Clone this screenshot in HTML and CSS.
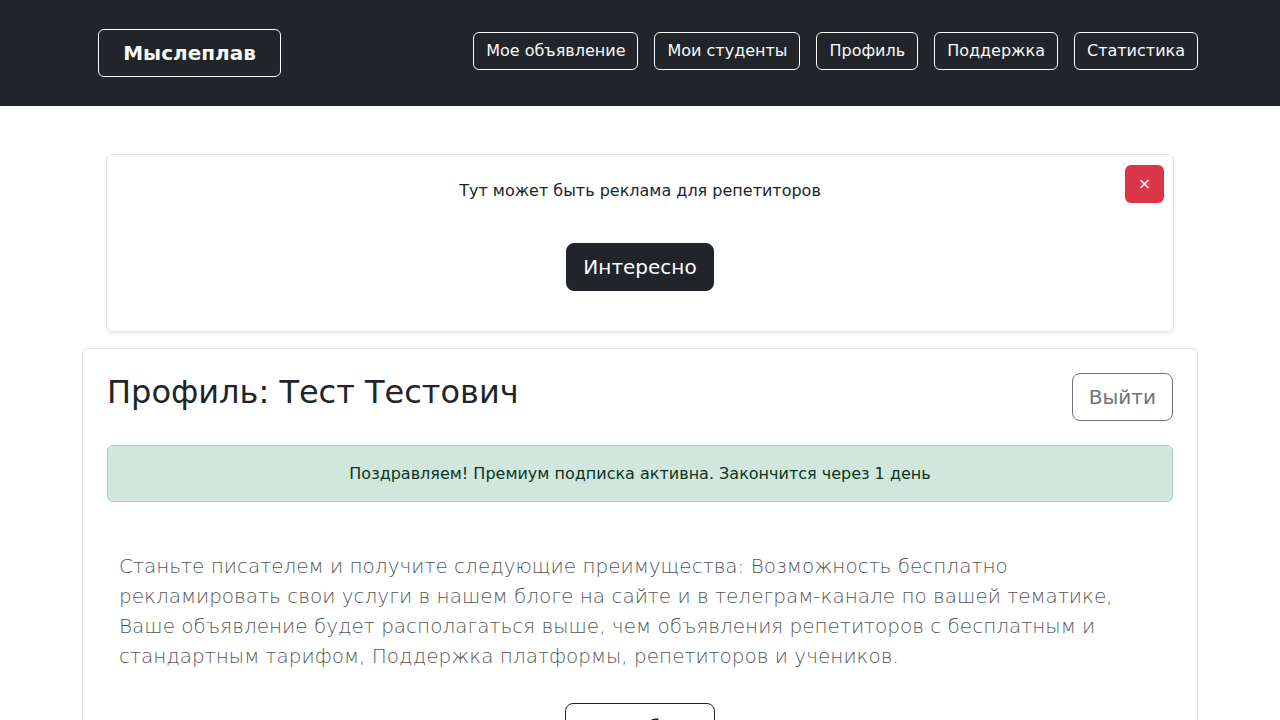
FILE: index.html
```html
<!DOCTYPE html>
<html lang="ru">
<head>
<meta charset="utf-8">
<title>Мыслеплав</title>
<link rel="stylesheet" href="styles.css">
</head>
<body>
<header class="navbar">
  <div class="container nav-inner">
    <a class="brand" href="#">Мыслеплав</a>
    <nav class="nav-links">
      <a class="nav-btn" href="#">Мое объявление</a>
      <a class="nav-btn" href="#">Мои студенты</a>
      <a class="nav-btn" href="#">Профиль</a>
      <a class="nav-btn" href="#">Поддержка</a>
      <a class="nav-btn" href="#">Статистика</a>
    </nav>
  </div>
</header>
<main class="container main">
  <section class="ad-card">
    <p class="ad-text">Тут может быть реклама для репетиторов</p>
    <button class="btn-dark-lg">Интересно</button>
    <button class="ad-close">×</button>
  </section>
  <section class="profile-card">
    <div class="profile-head">
      <h2 class="profile-title">Профиль: Тест Тестович</h2>
      <button class="btn-outline-secondary-lg">Выйти</button>
    </div>
    <div class="alert-success">Поздравляем! Премиум подписка активна. Закончится через 1 день</div>
    <p class="lead">Станьте писателем и получите следующие преимущества: Возможность бесплатно рекламировать свои услуги в нашем блоге на сайте и в телеграм-канале по вашей тематике, Ваше объявление будет располагаться выше, чем объявления репетиторов с бесплатным и стандартным тарифом, Поддержка платформы, репетиторов и учеников.</p>
    <div class="center">
      <button class="btn-outline-dark-lg">Подробнее</button>
    </div>
  </section>
</main>
</body>
</html>
```
FILE: styles.css
```css
* { box-sizing: border-box; }
html, body { margin: 0; padding: 0; }
body {
  font-family: "DejaVu Sans", sans-serif;
  font-size: 16px;
  line-height: 1.5;
  color: #212529;
  background: #fff;
}
.container {
  max-width: 1140px;
  margin: 0 auto;
  padding: 0 12px;
}
.navbar {
  background: #212529;
  height: 106px;
  padding-top: 29px;
}
.nav-inner {
  width: 100%;
  display: flex;
  align-items: flex-start;
  justify-content: space-between;
}
.brand {
  margin-left: 16px;
  display: inline-block;
  height: 48px;
  width: 183px;
  border: 1px solid #f8f9fa;
  border-radius: 6px;
  color: #f8f9fa;
  font-weight: bold;
  font-size: 20px;
  line-height: 46px;
  text-align: center;
  text-decoration: none;
}
.nav-links {
  display: flex;
  gap: 16px;
  margin-top: 3px;
}
.nav-btn {
  display: inline-block;
  border: 1px solid #f8f9fa;
  border-radius: 6px;
  color: #f8f9fa;
  text-decoration: none;
  padding: 6px 12px;
  font-size: 16px;
  line-height: 24px;
}
.main { padding-top: 48px; }
.ad-card {
  position: relative;
  margin: 0 24px 16px 24px;
  border: 1px solid #dee2e6;
  border-radius: 6px;
  box-shadow: 0 2px 4px rgba(0,0,0,0.08);
  padding: 24px 16px 40px;
  text-align: center;
}
.ad-text {
  margin: 0 0 40px;
  font-size: 16px;
  line-height: 24px;
}
.btn-dark-lg {
  font-family: inherit;
  background: #212529;
  color: #fff;
  border: 1px solid #212529;
  border-radius: 8px;
  font-size: 20px;
  line-height: 30px;
  padding: 8px 16px;
  cursor: pointer;
}
.ad-close {
  position: absolute;
  top: 10px;
  right: 9px;
  width: 39px;
  height: 38px;
  background: #dc3545;
  border: none;
  border-radius: 6px;
  color: #fff;
  font-family: inherit;
  font-size: 16px;
  line-height: 1;
  padding: 0;
}
.profile-card {
  border: 1px solid #dee2e6;
  border-radius: 6px;
  padding: 24px 24px 0;
}
.profile-head {
  display: flex;
  justify-content: space-between;
  align-items: flex-start;
}
.profile-title {
  margin: 0;
  font-size: 32px;
  font-weight: 500;
  line-height: 1.2;
  color: #212529;
}
.btn-outline-secondary-lg {
  font-family: inherit;
  background: #fff;
  color: #6c757d;
  border: 1px solid #6c757d;
  border-radius: 8px;
  font-size: 20px;
  line-height: 30px;
  padding: 8px 16px;
}
.alert-success {
  margin-top: 24px;
  background: #d1e7dd;
  border: 1px solid #a3cfbb;
  border-radius: 6px;
  color: #0a3622;
  padding: 16px 16px 15px;
  text-align: center;
  font-size: 16px;
  line-height: 24px;
}
.lead {
  margin: 49px 12px 32px;
  font-size: 20px;
  font-weight: 300;
  line-height: 30px;
  color: rgba(33, 37, 41, 0.8);
}
.center { text-align: center; }
.btn-outline-dark-lg {
  font-family: inherit;
  background: #fff;
  color: #212529;
  border: 1px solid #212529;
  border-radius: 8px;
  font-size: 20px;
  line-height: 30px;
  padding: 8px 16px;
}
```
